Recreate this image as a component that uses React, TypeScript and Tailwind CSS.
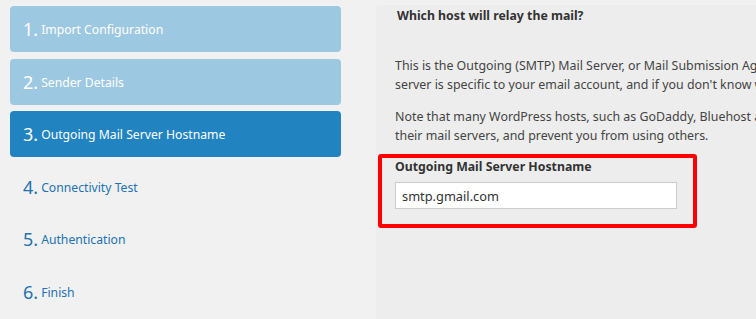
import React, { useState } from 'react';

const STEPS = [
  'Import Configuration',
  'Sender Details',
  'Outgoing Mail Server Hostname',
  'Connectivity Test',
  'Authentication',
  'Finish',
];

const FONT = { fontFamily: '"Noto Sans", "Open Sans", Arial, sans-serif' };

export default function App() {
  const [current] = useState(3);
  const [host, setHost] = useState('smtp.gmail.com');

  return (
    <div className="flex w-[756px] h-[319px] overflow-hidden bg-[#f1f1f1]" style={FONT}>
      {/* wizard steps */}
      <div className="w-[376px] shrink-0 pl-[10px] pt-[6px] flex flex-col gap-[6.5px]">
        {STEPS.map((label, i) => {
          const n = i + 1;
          const done = n < current;
          const active = n === current;
          const cls = active
            ? 'bg-[#2184c0] text-white'
            : done
              ? 'bg-[#9dc8e1] text-white'
              : 'text-[#2271b1]';
          return (
            <div key={label} className={`w-[331px] h-[46px] shrink-0 rounded-[4px] flex items-center pl-[13px] ${cls}`}>
              <span className="text-[18px] leading-none mr-[3px]">{n}.</span>
              <span className="text-[12.2px] leading-none mt-[3px]">{label}</span>
            </div>
          );
        })}
      </div>

      {/* step content */}
      <div className="flex-1 mt-[5px] rounded-tl-[4px] bg-[#ededed] text-[#444] overflow-hidden">
        <div className="w-[420px] pl-[19px] pr-2">
          <h3 className="text-[12.3px] font-bold text-[#333] leading-[20px] mt-[1px] ml-[2px]">Which host will relay the mail?</h3>
          <p className="text-[12.4px] leading-[19px] mt-[30px] whitespace-nowrap">
            This is the Outgoing (SMTP) Mail Server, or Mail Submission Agent (MSA). This
            <br />
            server is specific to your email account, and if you don't know what to use,
          </p>
          <p className="text-[12.4px] leading-[19px] mt-[13px] whitespace-nowrap">
            Note that many WordPress hosts, such as GoDaddy, Bluehost and Dreamhost, block
            <br />
            their mail servers, and prevent you from using others.
          </p>
        </div>
        <div className="ml-[2px] mt-[9px] w-[319px] h-[74px] border-[4px] border-[#ff0000] rounded-[3px] pl-[13px]">
          <label className="block text-[12.3px] font-bold text-[#333] leading-[20px] mt-[-1px]">Outgoing Mail Server Hostname</label>
          <input
            className="mt-[5px] w-[282px] h-[27px] bg-white border border-[#cccccc] px-[6px] text-[12.8px] text-[#333] outline-none"
            value={host}
            onChange={(e) => setHost(e.target.value)}
          />
        </div>
      </div>
    </div>
  );
}
